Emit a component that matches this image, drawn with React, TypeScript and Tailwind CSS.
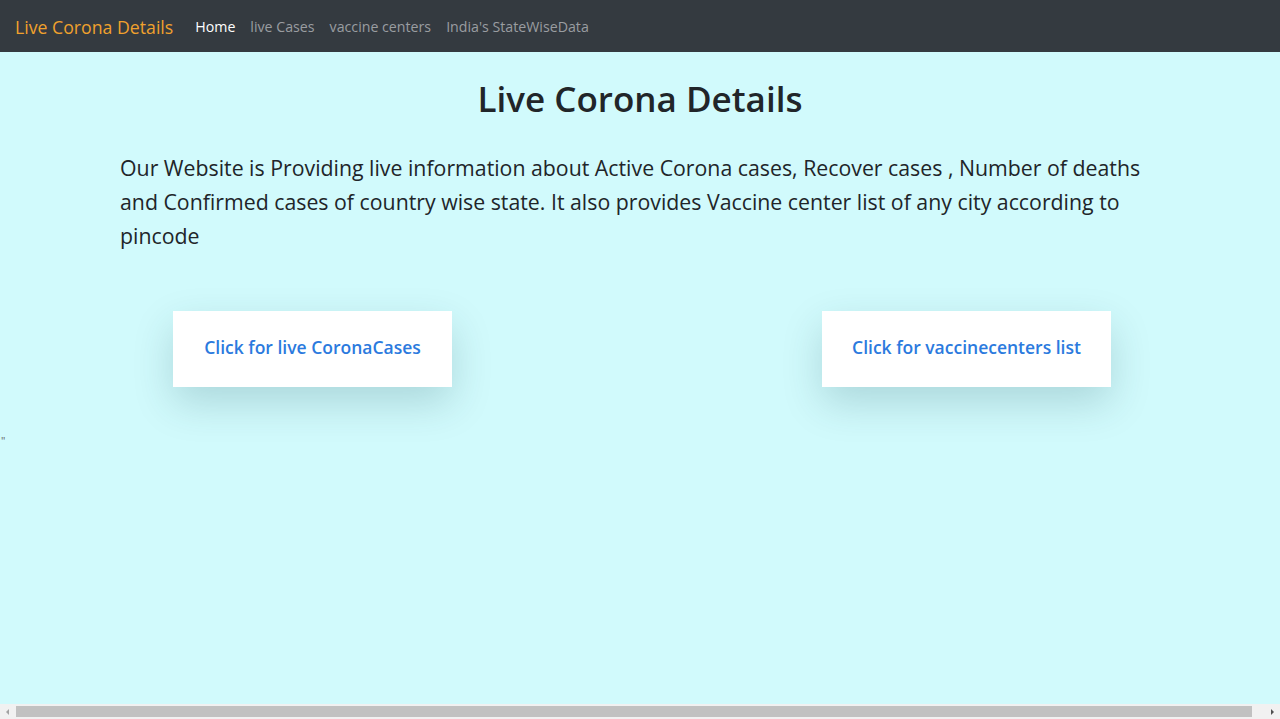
export default function App() {
  return (
    <div className="flex h-screen flex-col overflow-hidden bg-[#d1fafc] font-['Open_Sans',sans-serif] text-[#212529]">
      <nav className="flex h-[52px] shrink-0 items-center bg-[#343a40] px-[15px] pt-[2px]">
        <span className="mr-[22px] text-[17.7px] text-[#f0a12d]">Live Corona Details</span>
        <div className="flex items-center gap-[15px] text-[14.2px]">
          <span className="text-white">Home</span>
          <span className="text-[#9a9da1]">live Cases</span>
          <span className="text-[#9a9da1]">vaccine centers</span>
          <span className="text-[#9a9da1]">India's StateWiseData</span>
        </div>
      </nav>

      <main className="flex-1">
        <h1 className="mt-[25px] text-center text-[35px] font-semibold leading-[43px]">Live Corona Details</h1>
        <p className="mt-[31px] px-[120px] text-[21.3px] leading-[34px]">
          Our Website is Providing live information about Active Corona cases, Recover cases , Number of deaths
          <br />
          and Confirmed cases of country wise state. It also provides Vaccine center list of any city according to
          <br />
          pincode
        </p>

        <div className="mt-[58px] flex justify-between pl-[173px] pr-[169px]">
          <div className="flex h-[76px] w-[279px] items-center justify-center bg-white pb-[4px] text-[17.5px] font-semibold text-[#2b7ade] shadow-[0_16px_40px_rgba(0,60,70,0.18)]">
            Click for live CoronaCases
          </div>
          <div className="flex h-[76px] w-[289px] items-center justify-center bg-white pb-[4px] text-[17.5px] font-semibold text-[#2b7ade] shadow-[0_16px_40px_rgba(0,60,70,0.18)]">
            Click for vaccinecenters list
          </div>
        </div>

        <div className="mt-[49px] pl-[1px] text-[11px] leading-[10px] text-[#666]">"</div>
      </main>

      <div className="flex h-[15px] shrink-0 items-center bg-[#f1f1f1] px-[4px]">
        <svg width="8" height="8" viewBox="0 0 8 8" className="shrink-0">
          <polygon points="5,1 5,7 2,4" fill="#a3a3a3" />
        </svg>
        <div className="mx-[4px] h-[11px] flex-1 bg-[#c1c1c1]" />
        <svg width="8" height="8" viewBox="0 0 8 8" className="ml-[12px] shrink-0">
          <polygon points="3,1 3,7 6,4" fill="#505050" />
        </svg>
      </div>
    </div>
  );
}
